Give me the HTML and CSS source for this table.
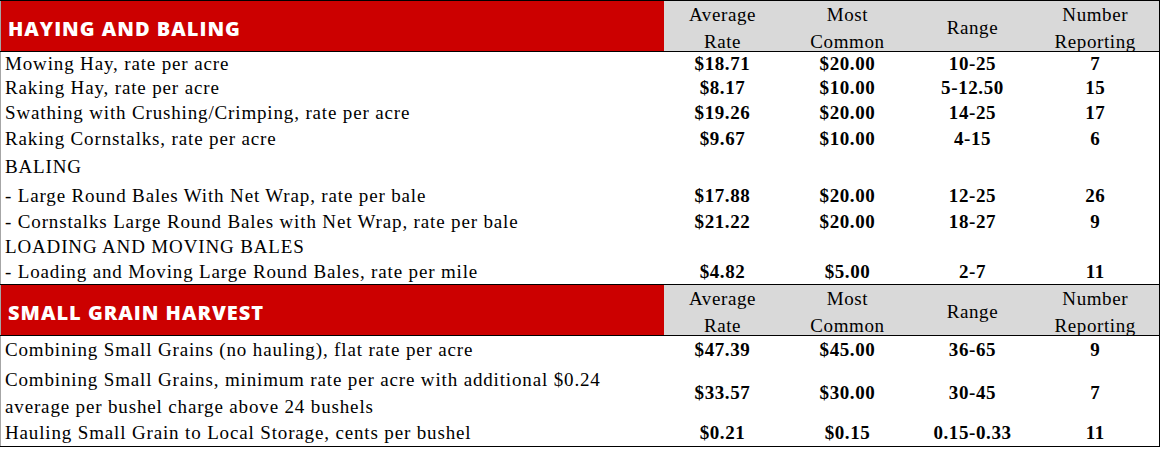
FILE: index.html
```html
<!DOCTYPE html>
<html>
<head>
<meta charset="utf-8">
<link rel="stylesheet" href="styles.css">
</head>
<body>
<table class="rates">
  <colgroup>
    <col class="c-label">
    <col class="c-avg">
    <col class="c-common">
    <col class="c-range">
    <col class="c-num">
  </colgroup>
  <tbody>
    <tr class="head">
      <th class="title"><div class="hd">HAYING AND BALING</div></th>
      <th class="colhead"><div class="hd"><span>Average</span><span>Rate</span></div></th>
      <th class="colhead"><div class="hd"><span>Most</span><span>Common</span></div></th>
      <th class="colhead"><div class="hd"><span>Range</span></div></th>
      <th class="colhead"><div class="hd"><span>Number</span><span>Reporting</span></div></th>
    </tr>
    <tr class="r24"><td class="label">Mowing Hay, rate per acre</td><td class="num">$18.71</td><td class="num">$20.00</td><td class="num">10-25</td><td class="num">7</td></tr>
    <tr class="r25"><td class="label">Raking Hay, rate per acre</td><td class="num">$8.17</td><td class="num">$10.00</td><td class="num">5-12.50</td><td class="num">15</td></tr>
    <tr class="r25"><td class="label">Swathing with Crushing/Crimping, rate per acre</td><td class="num">$19.26</td><td class="num">$20.00</td><td class="num">14-25</td><td class="num">17</td></tr>
    <tr class="r27"><td class="label">Raking Cornstalks, rate per acre</td><td class="num">$9.67</td><td class="num">$10.00</td><td class="num">4-15</td><td class="num">6</td></tr>
    <tr class="r29"><td class="label">BALING</td><td></td><td></td><td></td><td></td></tr>
    <tr class="r28"><td class="label">- Large Round Bales With Net Wrap, rate per bale</td><td class="num">$17.88</td><td class="num">$20.00</td><td class="num">12-25</td><td class="num">26</td></tr>
    <tr class="r25"><td class="label">- Cornstalks Large Round Bales with Net Wrap, rate per bale</td><td class="num">$21.22</td><td class="num">$20.00</td><td class="num">18-27</td><td class="num">9</td></tr>
    <tr class="r25"><td class="label">LOADING AND MOVING BALES</td><td></td><td></td><td></td><td></td></tr>
    <tr class="r25"><td class="label">- Loading and Moving Large Round Bales, rate per mile</td><td class="num">$4.82</td><td class="num">$5.00</td><td class="num">2-7</td><td class="num">11</td></tr>
    <tr class="head">
      <th class="title"><div class="hd">SMALL GRAIN HARVEST</div></th>
      <th class="colhead"><div class="hd"><span>Average</span><span>Rate</span></div></th>
      <th class="colhead"><div class="hd"><span>Most</span><span>Common</span></div></th>
      <th class="colhead"><div class="hd"><span>Range</span></div></th>
      <th class="colhead"><div class="hd"><span>Number</span><span>Reporting</span></div></th>
    </tr>
    <tr class="r29"><td class="label">Combining Small Grains (no hauling), flat rate per acre</td><td class="num">$47.39</td><td class="num">$45.00</td><td class="num">36-65</td><td class="num">9</td></tr>
    <tr class="r56"><td class="label two">Combining Small Grains, minimum rate per acre with additional $0.24<br>average per bushel charge above 24 bushels</td><td class="num">$33.57</td><td class="num">$30.00</td><td class="num">30-45</td><td class="num">7</td></tr>
    <tr class="r26"><td class="label">Hauling Small Grain to Local Storage, cents per bushel</td><td class="num">$0.21</td><td class="num">$0.15</td><td class="num">0.15-0.33</td><td class="num">11</td></tr>
  </tbody>
</table>
</body>
</html>
```

FILE: styles.css
```css
html, body {
  margin: 0;
  padding: 0;
  background: #ffffff;
}

.rates {
  border-collapse: collapse;
  table-layout: fixed;
  width: 1159px;
  border-top: 1px solid #000;
  border-right: 1px solid #000;
  border-bottom: 1px solid #000;
  border-left: 1px solid #a6a6a6;
  font-family: "Liberation Serif", "Times New Roman", serif;
  color: #000;
}

.c-label { width: 663px; }
.c-avg { width: 118px; }
.c-common { width: 132px; }
.c-range { width: 118px; }
.c-num { width: 128px; }

.rates td,
.rates th {
  padding: 0;
  vertical-align: middle;
}

.head {
  height: 50px;
}

.head th {
  border-top: 1px solid #000;
  border-bottom: 1px solid #000;
}

.hd {
  box-sizing: border-box;
  height: 50px;
  display: flex;
  flex-direction: column;
  justify-content: center;
}

.title {
  background: #cc0000;
  color: #fff;
  text-align: left;
  font-family: "Open Sans", "DejaVu Sans", sans-serif;
  font-weight: 800;
  font-size: 20px;
  letter-spacing: 1px;
}

.title .hd {
  padding-left: 7px;
  padding-top: 4px;
}

.colhead {
  background: #d9d9d9;
  font-weight: normal;
  font-size: 19px;
  line-height: 27px;
  letter-spacing: 0.6px;
  text-align: center;
}

.colhead .hd {
  align-items: center;
  padding-top: 3px;
}

.label {
  font-size: 19px;
  letter-spacing: 0.85px;
  padding-left: 4px !important;
  white-space: nowrap;
}

.label.two {
  line-height: 27px;
}

.num {
  font-size: 19px;
  font-weight: bold;
  text-align: center;
  letter-spacing: 0.6px;
}

.r24 { height: 24px; }
.r25 { height: 25px; }
.r26 { height: 26px; }
.r27 { height: 27px; }
.r28 { height: 28px; }
.r29 { height: 29px; }
.r56 { height: 56px; }
```
